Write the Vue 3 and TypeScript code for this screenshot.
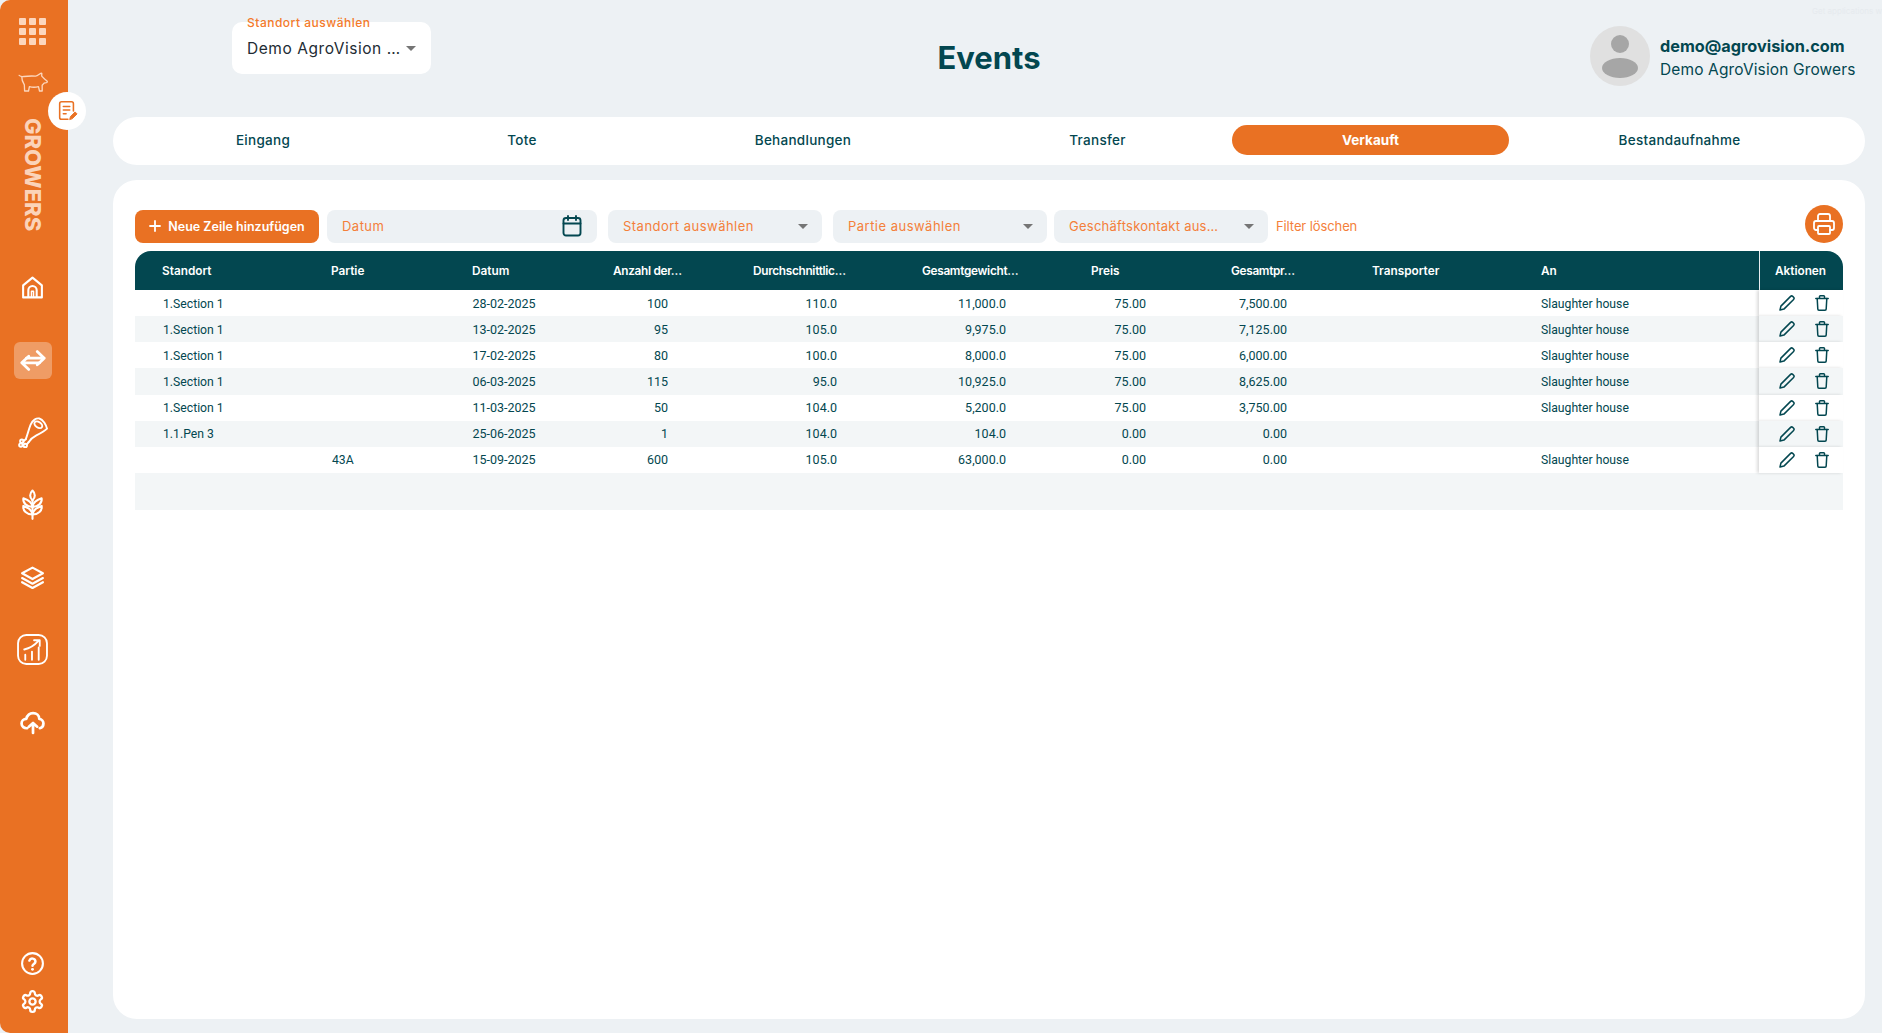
<script setup lang="ts">
interface Row {
  standort: string
  partie: string
  datum: string
  anzahl: string
  schnitt: string
  gewicht: string
  preis: string
  gesamt: string
  an: string
}

const tabs = ['Eingang', 'Tote', 'Behandlungen', 'Transfer', 'Verkauft', 'Bestandaufnahme']
const heads = [
  'Standort',
  'Partie',
  'Datum',
  'Anzahl der…',
  'Durchschnittlic…',
  'Gesamtgewicht…',
  'Preis',
  'Gesamtpr…',
  'Transporter',
  'An',
]
const sh = 'Slaughter house'
const rows: Row[] = [
  { standort: '1.Section 1', partie: '', datum: '28-02-2025', anzahl: '100', schnitt: '110.0', gewicht: '11,000.0', preis: '75.00', gesamt: '7,500.00', an: sh },
  { standort: '1.Section 1', partie: '', datum: '13-02-2025', anzahl: '95', schnitt: '105.0', gewicht: '9,975.0', preis: '75.00', gesamt: '7,125.00', an: sh },
  { standort: '1.Section 1', partie: '', datum: '17-02-2025', anzahl: '80', schnitt: '100.0', gewicht: '8,000.0', preis: '75.00', gesamt: '6,000.00', an: sh },
  { standort: '1.Section 1', partie: '', datum: '06-03-2025', anzahl: '115', schnitt: '95.0', gewicht: '10,925.0', preis: '75.00', gesamt: '8,625.00', an: sh },
  { standort: '1.Section 1', partie: '', datum: '11-03-2025', anzahl: '50', schnitt: '104.0', gewicht: '5,200.0', preis: '75.00', gesamt: '3,750.00', an: sh },
  { standort: '1.1.Pen 3', partie: '', datum: '25-06-2025', anzahl: '1', schnitt: '104.0', gewicht: '104.0', preis: '0.00', gesamt: '0.00', an: '' },
  { standort: '', partie: '43A', datum: '15-09-2025', anzahl: '600', schnitt: '105.0', gewicht: '63,000.0', preis: '0.00', gesamt: '0.00', an: sh },
]
</script>

<template>
  <div class="app">
    <aside class="side">
      <div class="apps">
        <i v-for="n in 9" :key="n"></i>
      </div>
      <svg class="pig" viewBox="0 0 32 22" fill="none" stroke="currentColor" stroke-width="1.4" stroke-linejoin="round" stroke-linecap="round">
        <path d="M1 3.5c1.5 1.6 3 1.5 5 1.2 3-.4 8-.6 12-.4 1.700.1 3.200-1.300 4.500-2.300.5-.4 2-1 2.200-.4l-.1 2.700 3 3 2.800 2.400c.2.700-.2 1.300-.9 1.500l-2.400.5-2 2.200v6h-2.800l-1.100-4.500c-3 .7-6.500.7-9.500 0l-.9 4.500H6.700l-.3-6.500C5 11 3.600 9 3.800 5.500" />
      </svg>
      <div class="brand">GROWERS</div>
      <nav class="nav">
        <span class="item">
          <svg class="mid" viewBox="0 0 24 24" fill="none" stroke="#fff" stroke-width="2" stroke-linejoin="round" stroke-linecap="round">
            <path d="M3 21.500V10l9-7.500 9 7.500v11.500z" />
            <path d="M8 21v-6.500a4 4 0 0 1 8 0V21" />
            <path d="M11 21v-5.500h2V21" stroke-width="1.400" />
          </svg>
        </span>
        <span class="item active">
          <svg viewBox="0 0 32 24" fill="none" stroke="#fff" stroke-width="3" stroke-linejoin="round" stroke-linecap="round">
            <path d="M9 9.500h19M20.500 2.500l7.500 7-7.500 7" />
            <path d="M23 14.500H4M11.500 7.500l-7.500 7 7.500 7" />
          </svg>
        </span>
        <span class="item">
          <svg class="big" viewBox="0 0 32 32" fill="none" stroke="#fff" stroke-width="2" stroke-linejoin="round" stroke-linecap="round">
            <path d="M9 23C11 18 12 13 14 8 16 3 20 1 23 1.500 27 2.500 30 8 31 12 28 15 24 17 20 19 17 20.500 14 23 12 26" />
            <ellipse cx="22" cy="8" rx="4.500" ry="2.800" transform="rotate(35 22 8)" />
            <path d="M9 23l-2.500 2M12 26l-2 2.500" />
            <circle cx="5" cy="25" r="1.800" />
            <circle cx="4" cy="29" r="1.800" />
            <circle cx="8.500" cy="29.500" r="1.800" />
          </svg>
        </span>
        <span class="item">
          <svg class="tall" viewBox="0 0 24 32" fill="none" stroke="#fff" stroke-width="2.200" stroke-linejoin="round" stroke-linecap="round">
            <path d="M12 1.500c-3.200 3-3.200 7 0 10 3.200-3 3.200-7 0-10z" />
            <path d="M12 31V11.500" />
            <path d="M12 18.500C11.500 13.500 7 11 2.500 9.500c-.8 5 3.500 9 9.500 9z" />
            <path d="M12 18.500c.5-5 5-7.500 9.500-9 .8 5-3.500 9-9.500 9z" />
            <path d="M12 26.500c-.5-5-5-7.500-9.500-9-.8 5 3.500 9 9.500 9z" />
            <path d="M12 26.500c.5-5 5-7.500 9.500-9 .8 5-3.500 9-9.500 9z" />
          </svg>
        </span>
        <span class="item">
          <svg class="mid" viewBox="0 0 24 24" fill="none" stroke="#fff" stroke-width="2.100" stroke-linejoin="round" stroke-linecap="round">
            <path d="M12 2.500l10 5.500-10 5.500L2 8z" />
            <path d="M2 12.500l10 5.500 10-5.500" />
            <path d="M2 16.500l10 5.500 10-5.500" />
          </svg>
        </span>
        <span class="item">
          <svg class="big" viewBox="0 0 30 30" fill="none" stroke="#fff" stroke-width="1.800" stroke-linejoin="round" stroke-linecap="round">
            <rect x="1" y="1" width="28" height="28" rx="8" />
            <path d="M7 15c5-1 10-4 14-8.500M16.500 6H22v5.500" />
            <path d="M8 25v-5M14.500 25v-8M21 25V13" />
          </svg>
        </span>
        <span class="item">
          <svg class="mid" viewBox="0 0 24 22" fill="none" stroke="#fff" stroke-width="2.600" stroke-linejoin="round" stroke-linecap="round">
            <path d="M7 16.500c-3 .3-5.500-1.500-5.500-4.500 0-2.500 2-4.500 4.500-4.500C7 4 9.500 2 12.500 2c3.500 0 6 2.500 6 5.500 2.500.3 4 2.500 4 4.500 0 2.300-1.500 4-3.500 4.500" />
            <path d="M12.500 21v-9M8.500 15l4-3.500 4 3.500" />
          </svg>
        </span>
      </nav>
      <div class="foot">
        <svg viewBox="0 0 24 24" fill="none" stroke="#fff" stroke-width="2" stroke-linecap="round" stroke-linejoin="round">
          <circle cx="12" cy="12" r="10" />
          <path d="M9 9.200a3 3 0 0 1 5.800 1c0 2-2.800 2.500-2.800 4" stroke-width="2.400" />
          <path d="M12 17.600h.01" stroke-width="2.800" />
        </svg>
        <svg class="gear" viewBox="0 0 24 24" fill="none" stroke="#fff" stroke-width="2.200" stroke-linecap="round" stroke-linejoin="round">
          <path d="M12.220 2h-.44a2 2 0 0 0-2 2v.18a2 2 0 0 1-1 1.730l-.43.250a2 2 0 0 1-2 0l-.15-.08a2 2 0 0 0-2.730.730l-.22.380a2 2 0 0 0 .730 2.730l.15.100a2 2 0 0 1 1 1.720v.510a2 2 0 0 1-1 1.740l-.15.090a2 2 0 0 0-.730 2.730l.22.380a2 2 0 0 0 2.730.730l.15-.08a2 2 0 0 1 2 0l.43.250a2 2 0 0 1 1 1.730V20a2 2 0 0 0 2 2h.44a2 2 0 0 0 2-2v-.18a2 2 0 0 1 1-1.730l.43-.25a2 2 0 0 1 2 0l.15.080a2 2 0 0 0 2.730-.730l.22-.390a2 2 0 0 0-.730-2.730l-.15-.08a2 2 0 0 1-1-1.740v-.5a2 2 0 0 1 1-1.740l.15-.09a2 2 0 0 0 .730-2.730l-.22-.38a2 2 0 0 0-2.730-.730l-.15.080a2 2 0 0 1-2 0l-.43-.25a2 2 0 0 1-1-1.730V4a2 2 0 0 0-2-2z" />
          <circle cx="12" cy="12" r="3" />
        </svg>
      </div>
      <span class="float">
        <svg viewBox="0 0 24 24" fill="none" stroke="#e97123" stroke-width="1.700" stroke-linecap="round" stroke-linejoin="round">
          <path d="M13 21H6a2 2 0 0 1-2-2V4a2 2 0 0 1 2-2h11a2 2 0 0 1 2 2v8" />
          <path d="M8 7h7M8 11h7M8 15h3" />
          <path d="M15 21l.8-3 5-5 2.200 2.200-5 5z" fill="#e97123" stroke-width="1" />
        </svg>
      </span>
    </aside>

    <main class="main">
      <header class="top">
        <div class="site">
          <span class="site-label">Standort auswählen</span>
          <span class="site-value">Demo AgroVision …</span>
          <i class="caret"></i>
        </div>
        <h1 class="title">Events</h1>
        <div class="user">
          <svg class="avatar" viewBox="0 0 60 60">
            <circle cx="30" cy="30" r="30" fill="#e0e0e0" />
            <circle cx="30" cy="18" r="9" fill="#a6a6a6" />
            <ellipse cx="30" cy="42" rx="18" ry="10" fill="#a6a6a6" />
          </svg>
          <div class="user-text">
            <div class="mail">demo@agrovision.com</div>
            <div class="org">Demo AgroVision Growers</div>
          </div>
          <span class="ghost">Get applications w</span>
        </div>
      </header>

      <div class="tabs">
        <span v-for="t in tabs" :key="t" class="tab" :class="{ on: t === 'Verkauft' }">{{ t }}</span>
      </div>

      <section class="card">
        <div class="tools">
          <button class="add">
            <svg viewBox="0 0 12 12" fill="none" stroke="#fff" stroke-width="1.800" stroke-linecap="round"><path d="M6 1v10M1 6h10" /></svg>
            Neue Zeile hinzufügen
          </button>
          <div class="field date">
            <span>Datum</span>
            <svg viewBox="0 0 20 22" fill="none" stroke="#034750" stroke-width="1.900" stroke-linecap="round" stroke-linejoin="round">
              <rect x="1.500" y="3" width="17" height="17.500" rx="2.500" />
              <path d="M1.500 8.500h17M6 1v4M14 1v4" />
            </svg>
          </div>
          <div class="field s1"><span>Standort auswählen</span><i class="caret"></i></div>
          <div class="field s2"><span>Partie auswählen</span><i class="caret"></i></div>
          <div class="field s3"><span>Geschäftskontakt aus…</span><i class="caret"></i></div>
          <span class="clear">Filter löschen</span>
          <button class="print">
            <svg viewBox="0 0 24 24" fill="none" stroke="#fff" stroke-width="1.800" stroke-linecap="round" stroke-linejoin="round">
              <path d="M6 9V4a2 2 0 0 1 2-2h8a2 2 0 0 1 2 2v5" />
              <path d="M6 18H4a2 2 0 0 1-2-2v-5a2 2 0 0 1 2-2h16a2 2 0 0 1 2 2v5a2 2 0 0 1-2 2h-2" />
              <rect x="6" y="14" width="12" height="8" rx="1" />
            </svg>
          </button>
        </div>

        <div class="table">
          <div class="row head">
            <span v-for="h in heads" :key="h" class="th" :class="{ cut: h.endsWith('…') }">{{ h }}</span>
            <span class="th act">Aktionen</span>
          </div>
          <div v-for="(r, i) in rows" :key="i" class="row body">
            <span class="td low ins">{{ r.standort }}</span>
            <span class="td low ins">{{ r.partie }}</span>
            <span class="td">{{ r.datum }}</span>
            <span class="td num">{{ r.anzahl }}</span>
            <span class="td num">{{ r.schnitt }}</span>
            <span class="td num">{{ r.gewicht }}</span>
            <span class="td num">{{ r.preis }}</span>
            <span class="td num">{{ r.gesamt }}</span>
            <span class="td"></span>
            <span class="td low">{{ r.an }}</span>
            <span class="td act">
              <svg class="pen" viewBox="0 0 16 16" fill="none" stroke="#034750" stroke-width="1.500" stroke-linejoin="round" stroke-linecap="round">
                <path d="M1 15l.9-3.900L11.600 1.400a1.500 1.500 0 0 1 2.100 0l.9.900a1.500 1.500 0 0 1 0 2.100L4.900 14.100z" />
              </svg>
              <svg class="bin" viewBox="0 0 14 16" fill="none" stroke="#034750" stroke-width="1.500" stroke-linejoin="round" stroke-linecap="round">
                <path d="M.8 3.500h12.400M4.500 3.500V1.600c0-.4.300-.8.800-.8h3.400c.5 0 .8.400.8.800v1.900" />
                <path d="M2.200 3.500l.6 10.500c0 .7.500 1.200 1.200 1.200h6c.7 0 1.200-.5 1.200-1.200l.6-10.500" />
              </svg>
            </span>
          </div>
          <div class="tail"></div>
        </div>
      </section>
    </main>
  </div>
</template>

<style>
html,
body {
  margin: 0;
  background: #edf1f4;
}
</style>

<style scoped>
.app {
  display: flex;
  width: 1882px;
  height: 1033px;
  overflow: hidden;
  background: #edf1f4;
  font-family: Inter, "Noto Sans", sans-serif;
  color: #034750;
}

/* sidebar */
.side {
  position: relative;
  flex: 0 0 68px;
  box-sizing: border-box;
  padding-right: 3px;
  display: flex;
  flex-direction: column;
  align-items: center;
  background: #e97123;
  border-radius: 10px 0 0 10px;
  color: #fcd6bd;
}
.apps {
  display: grid;
  grid-template-columns: repeat(3, 7px);
  gap: 3px;
  margin-top: 18px;
}
.apps i {
  width: 7px;
  height: 7px;
  background: #fcd6bd;
  border-radius: 1px;
}
.pig {
  width: 31px;
  height: 21px;
  margin-top: 27px;
  margin-left: 1px;
}
.brand {
  margin-top: 25px;
  writing-mode: vertical-rl;
  font-size: 22px;
  font-weight: 800;
  line-height: 22px;
  letter-spacing: 0;
  color: #fbd3b9;
}
.nav {
  display: flex;
  flex-direction: column;
  align-items: center;
  margin-top: 38px;
  gap: 35.400px;
}
.item {
  width: 38px;
  height: 37px;
  display: flex;
  align-items: center;
  justify-content: center;
  border-radius: 6px;
}
.item svg {
  width: 23px;
  height: 23px;
}
.item svg.mid {
  width: 25px;
  height: 25px;
}
.item svg.big {
  width: 31px;
  height: 31px;
}
.item svg.tall {
  flex: none;
  width: 23px;
  height: 31px;
}
.item.active {
  background: rgba(255, 255, 255, 0.3);
}
.item.active svg {
  width: 30px;
}
.foot {
  margin-top: auto;
  margin-bottom: 19px;
  display: flex;
  flex-direction: column;
  align-items: center;
  gap: 13px;
}
.foot svg {
  width: 25px;
  height: 25px;
}
.float {
  position: absolute;
  left: 48px;
  top: 92px;
  width: 38px;
  height: 38px;
  border-radius: 50%;
  background: #fff;
  display: flex;
  align-items: center;
  justify-content: center;
}
.float svg {
  width: 22px;
  height: 22px;
}

/* main */
.main {
  flex: 1;
  min-width: 0;
  display: flex;
  flex-direction: column;
  padding: 0 17px 14px 45px;
}
.top {
  flex: 0 0 117px;
  display: grid;
  grid-template-columns: 1fr auto 1fr;
  align-items: start;
}
.site {
  position: relative;
  justify-self: start;
  margin: 22px 0 0 119px;
  width: 199px;
  height: 52px;
  box-sizing: border-box;
  padding: 0 15px;
  background: #fff;
  border-radius: 10px;
  display: flex;
  align-items: center;
  justify-content: space-between;
}
.site-label {
  position: absolute;
  left: 15px;
  top: -7px;
  font-size: 12px;
  font-weight: 500;
  letter-spacing: 0.500px;
  color: #f47a2a;
}
.site-value {
  font-size: 15.500px;
  letter-spacing: 0.550px;
  color: #222b33;
}
.caret {
  flex: none;
  width: 0;
  height: 0;
  border-left: 5px solid transparent;
  border-right: 5px solid transparent;
  border-top: 5px solid #757575;
}
.title {
  margin: 40px 0 0;
  font-size: 31px;
  line-height: 36px;
  font-weight: 700;
  color: #034750;
}
.user {
  position: relative;
  justify-self: end;
  width: 275px;
  margin-top: 26px;
  display: flex;
  align-items: center;
  gap: 10px;
}
.avatar {
  width: 60px;
  height: 60px;
  flex: none;
}
.user-text {
  padding-top: 4px;
}
.mail {
  font-size: 16.300px;
  font-weight: 700;
  line-height: 24px;
  white-space: nowrap;
}
.org {
  font-size: 15.500px;
  line-height: 24px;
  white-space: nowrap;
  letter-spacing: 0.130px;
}
.ghost {
  position: absolute;
  right: -17px;
  top: -20px;
  white-space: nowrap;
  font-size: 8px;
  color: #e6eaee;
}

/* tabs */
.tabs {
  flex: none;
  height: 48px;
  box-sizing: border-box;
  background: #fff;
  border-radius: 24px;
  display: grid;
  grid-template-columns: 276px 242px 320px 269px 277px 341px;
  padding: 8px 15px 10px 12px;
}
.tab {
  display: flex;
  align-items: center;
  justify-content: center;
  padding-bottom: 1px;
  font-size: 13.500px;
  font-weight: 500;
  letter-spacing: 0.280px;
  border-radius: 15px;
}
.tab.on {
  background: #e97123;
  color: #fff;
  font-weight: 700;
  letter-spacing: 0;
}

/* card */
.card {
  flex: 1;
  margin-top: 15px;
  box-sizing: border-box;
  padding: 26px 22px 0;
  background: #fff;
  border-radius: 24px;
}
.tools {
  height: 37px;
  display: flex;
  align-items: flex-end;
  margin-bottom: 8px;
}
.add {
  width: 184px;
  height: 33px;
  padding: 0 0 1px;
  border: 0;
  border-radius: 8px;
  background: #e97123;
  color: #fff;
  font: 600 12.500px Inter, sans-serif;
  display: flex;
  align-items: center;
  justify-content: center;
  gap: 7px;
}
.add svg {
  width: 12px;
  height: 12px;
}
.field {
  height: 33px;
  box-sizing: border-box;
  padding: 0 14px 2px 15px;
  background: #edf1f4;
  border-radius: 8px;
  display: flex;
  align-items: center;
  justify-content: space-between;
  font-size: 13px;
  color: #f47f3a;
  white-space: nowrap;
  letter-spacing: 0.480px;
}
.field svg,
.field .caret {
  margin-top: 1px;
}
.date {
  width: 270px;
  margin-left: 8px;
  padding-right: 15px;
}
.date svg {
  width: 20px;
  height: 22px;
}
.s1 {
  width: 214px;
  margin-left: 11px;
}
.s2 {
  width: 214px;
  margin-left: 11px;
}
.s3 {
  width: 214px;
  margin-left: 7px;
  letter-spacing: 0.250px;
}
.clear {
  margin-left: 8px;
  align-self: center;
  padding-top: 2px;
  font-size: 13px;
  letter-spacing: -0.100px;
  color: #f47f3a;
}
.print {
  margin-left: auto;
  width: 38px;
  height: 38px;
  padding: 0;
  border: 0;
  border-radius: 50%;
  background: #e97123;
  display: flex;
  align-items: center;
  justify-content: center;
}
.print svg {
  width: 24px;
  height: 24px;
}

/* table */
.row {
  display: grid;
  grid-template-columns: 169px 141px 141px 140px 169px 169px 140px 141px 169px 245px 84px;
}
.head {
  height: 39px;
  background: #034750;
  border-radius: 16px 16px 0 0;
  color: #fff;
}
.th {
  display: flex;
  align-items: center;
  padding-left: 27px;
  font-size: 11.800px;
  font-weight: 600;
  white-space: nowrap;
}
.th.cut {
  letter-spacing: -0.300px;
}
.th.act {
  padding: 0 2px 0 0;
  justify-content: center;
  border-left: 1px solid #e8edf0;
}
.body {
  height: 26.150px;
  background: #fff;
}
.body:nth-of-type(odd) {
  background: #f3f6f7;
}
.td {
  display: flex;
  align-items: center;
  padding-left: 27.500px;
  font-family: Roboto, sans-serif;
  font-size: 12.500px;
  color: #034750;
  white-space: nowrap;
}
.td.low {
  padding-top: 1px;
  padding-left: 27px;
  font-size: 12.200px;
}
.td.low.ins {
  padding-left: 28px;
}
.td.num {
  justify-content: flex-end;
  padding: 0 58px 0 0;
}
.td.act {
  padding: 0 0 0 20px;
  gap: 20px;
  box-shadow: -2px 0 3px rgba(0, 0, 0, 0.14);
  background: inherit;
}
.pen {
  width: 16px;
  height: 16px;
}
.bin {
  width: 14px;
  height: 16px;
}
.tail {
  height: 37px;
  background: #f3f6f7;
}
</style>
